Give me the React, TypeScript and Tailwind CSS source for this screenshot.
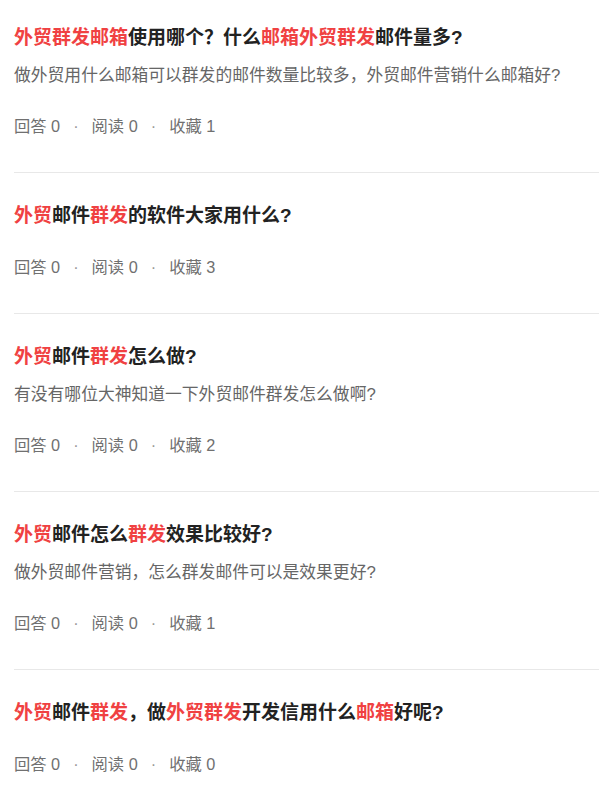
import React from "react";

type Seg = { t: string; hl?: boolean };
type Item = { title: Seg[]; desc?: string; fav: number };

const items: Item[] = [
  {
    title: [
      { t: "外贸群发邮箱", hl: true },
      { t: "使用哪个？什么" },
      { t: "邮箱外贸群发", hl: true },
      { t: "邮件量多?" },
    ],
    desc: "做外贸用什么邮箱可以群发的邮件数量比较多，外贸邮件营销什么邮箱好?",
    fav: 1,
  },
  {
    title: [
      { t: "外贸", hl: true },
      { t: "邮件" },
      { t: "群发", hl: true },
      { t: "的软件大家用什么?" },
    ],
    fav: 3,
  },
  {
    title: [
      { t: "外贸", hl: true },
      { t: "邮件" },
      { t: "群发", hl: true },
      { t: "怎么做?" },
    ],
    desc: "有没有哪位大神知道一下外贸邮件群发怎么做啊?",
    fav: 2,
  },
  {
    title: [
      { t: "外贸", hl: true },
      { t: "邮件怎么" },
      { t: "群发", hl: true },
      { t: "效果比较好?" },
    ],
    desc: "做外贸邮件营销，怎么群发邮件可以是效果更好?",
    fav: 1,
  },
  {
    title: [
      { t: "外贸", hl: true },
      { t: "邮件" },
      { t: "群发", hl: true },
      { t: "，做" },
      { t: "外贸群发", hl: true },
      { t: "开发信用什么" },
      { t: "邮箱", hl: true },
      { t: "好呢?" },
    ],
    fav: 0,
  },
];

export default function App() {
  return (
    <div
      className="w-[599px] min-h-[794px] bg-white pl-[14px]"
      style={{ fontFamily: '"Liberation Sans", "Noto Sans CJK SC", sans-serif' }}
    >
      {items.map((it, i) => (
        <div
          key={i}
          className={
            i === 0
              ? "pt-[25px] pb-[34px]"
              : "border-t border-[#e8e8e8] pt-[30px] pb-[34px]"
          }
        >
          <div className="text-[19px] leading-[26px] font-bold text-[#222222] whitespace-nowrap">
            {it.title.map((s, j) => (
              <span key={j} className={s.hl ? "text-[#f04142]" : ""}>
                {s.t}
              </span>
            ))}
          </div>
          {it.desc && (
            <div className="mt-[12px] text-[16.8px] leading-[25px] text-[#666666] whitespace-nowrap">
              {it.desc}
            </div>
          )}
          <div className="mt-[26px] flex items-center text-[16.3px] leading-[24px] text-[#707070]">
            <span>回答 0</span>
            <span className="px-[13px] text-[#999999]">·</span>
            <span>阅读 0</span>
            <span className="px-[13px] text-[#999999]">·</span>
            <span>收藏 {it.fav}</span>
          </div>
        </div>
      ))}
    </div>
  );
}
